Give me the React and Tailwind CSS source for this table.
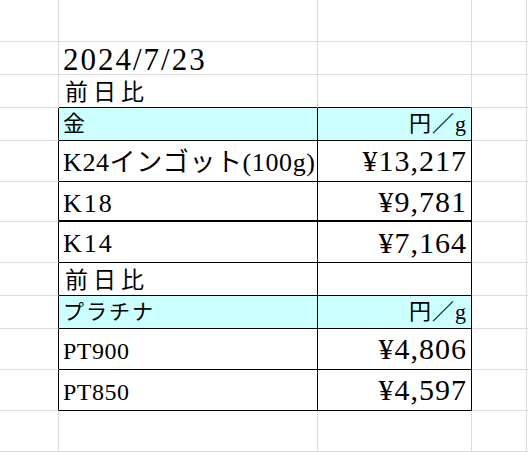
const FONT = "font-['Liberation_Serif','Noto_Sans_CJK_JP',serif]"

const RIGHT = {
  g: 'border-r border-r-[#dcdcdc]',
  k: 'border-r border-r-black',
  n: '',
}

const BOTTOM = {
  g: 'border-b border-b-[#dcdcdc]',
  k: 'border-b border-b-black',
  k2: 'border-b-2 border-b-black',
}

function Cell({ w, r = 'g', b = 'g', bg = '', className = '', children }) {
  return (
    <div
      className={`${w} ${RIGHT[r]} ${BOTTOM[b]} ${bg} flex items-center whitespace-nowrap overflow-visible ${className}`}
    >
      {children}
    </div>
  )
}

// one spreadsheet row: columns A..E
function Row({ h, a = 'g', bR = 'g', bB = 'g', cR = 'g', cB = 'g', bg = '', left, right, leftCls = '', rightCls = '' }) {
  return (
    <div className={`flex ${h}`}>
      <Cell w="w-[59px] shrink-0" r={a} />
      <Cell w="w-[259px] shrink-0" r={bR} b={bB} bg={bg} className={`pl-[4px] ${leftCls}`}>
        {left}
      </Cell>
      <Cell w="w-[154px] shrink-0" r={cR} b={cB} bg={bg} className={`justify-end pr-[4px] ${rightCls}`}>
        {right}
      </Cell>
      <Cell w="w-[55px] shrink-0" />
      <Cell w="flex-1" r="n" />
    </div>
  )
}

const label = 'text-[26px] leading-none tracking-[2px]'
const value = 'text-[30px] leading-none tracking-[1px]'
const small = 'text-[22px] leading-none'

export default function App() {
  return (
    <div className={`w-[528px] h-[453px] overflow-hidden bg-white text-black ${FONT}`}>
      <Row h="h-[42px]" />
      <Row
        h="h-[33px]"
        left={<span className="text-[31px] leading-none tracking-[2px] pt-[3px]">2024/7/23</span>}
      />
      <Row
        h="h-[33px]"
        bB="k"
        cB="k"
        left={<span className="text-[23px] leading-none tracking-[5px] pt-[2px] pl-[2px]">前日比</span>}
      />

      {/* ── 金 ─────────────────────────────── */}
      <Row
        h="h-[33px]"
        a="k" bR="k" bB="k" cR="k" cB="k"
        bg="bg-[#ccffff]"
        left={<span className={small}>金</span>}
        right={<span className={`${small} tracking-[1px]`}>円／g</span>}
      />
      <Row
        h="h-[41px]"
        a="k" bR="k" bB="k" cR="k" cB="k"
        left={<span className="text-[26px] leading-none tracking-[0.6px] pt-[3px]">K24インゴット(100g)</span>}
        right={<span className={value}>¥13,217</span>}
      />
      <Row
        h="h-[40px]"
        a="k" bR="k" bB="k2" cR="k" cB="k2"
        left={<span className={`${label} pt-[6px]`}>K18</span>}
        right={<span className={`${value} pt-[2px]`}>¥9,781</span>}
      />
      <Row
        h="h-[41px]"
        a="k" bR="k" bB="k" cR="k" cB="k"
        left={<span className={`${label} pt-[4px]`}>K14</span>}
        right={<span className={`${value} pt-[2px]`}>¥7,164</span>}
      />
      <Row
        h="h-[33px]"
        a="k" bR="k" bB="k" cR="k" cB="k"
        left={<span className="text-[23px] leading-none tracking-[5px] pt-[2px] pl-[2px]">前日比</span>}
      />

      {/* ── プラチナ ───────────────────────── */}
      <Row
        h="h-[33px]"
        a="k" bR="k" bB="k" cR="k" cB="k"
        bg="bg-[#ccffff]"
        left={<span className="text-[21px] leading-none tracking-[2px]">プラチナ</span>}
        right={<span className={`${small} tracking-[1px]`}>円／g</span>}
      />
      <Row
        h="h-[41px]"
        a="k" bR="k" bB="k" cR="k" cB="k"
        left={<span className="text-[24px] leading-none tracking-[0.5px] pt-[4px]">PT900</span>}
        right={<span className={value}>¥4,806</span>}
      />
      <Row
        h="h-[41px]"
        a="k" bR="k" bB="k" cR="k" cB="k"
        left={<span className="text-[24px] leading-none tracking-[0.5px] pt-[4px]">PT850</span>}
        right={<span className={value}>¥4,597</span>}
      />
      <Row h="h-[41px]" />
    </div>
  )
}
